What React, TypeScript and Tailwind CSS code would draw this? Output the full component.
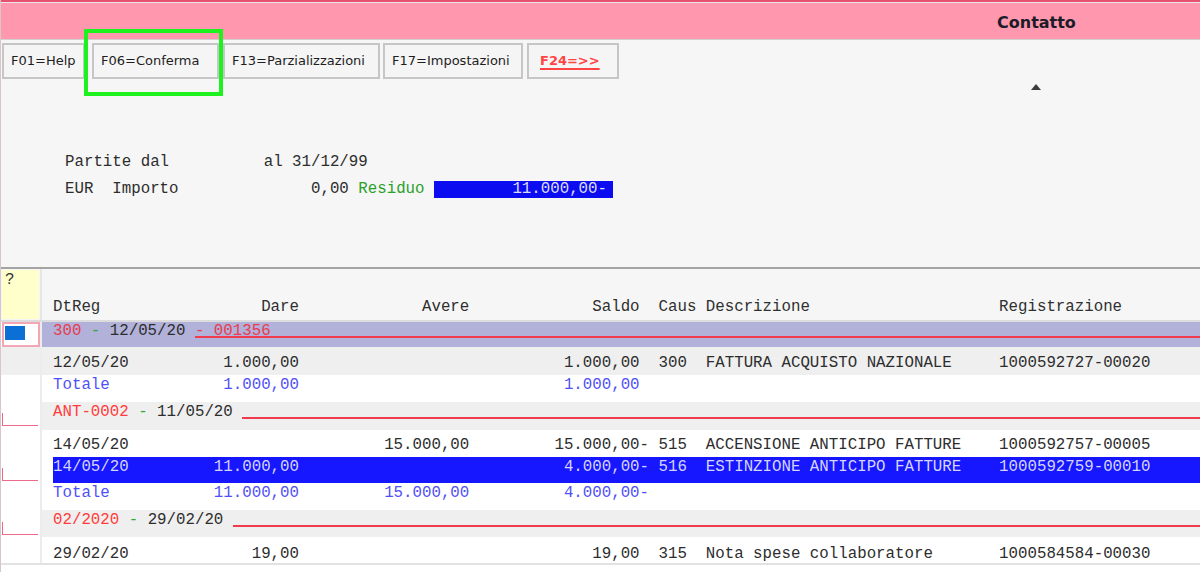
import React from "react";

const mono = "font-['Liberation_Mono',monospace] text-[15.78px]";

function pad(parts: Array<[number, string]>): string {
  let s = "";
  for (const [col, t] of parts) {
    while (s.length < col) s += " ";
    s += t;
  }
  return s;
}

function Row({
  h,
  gutterCls = "bg-white",
  mainCls = "bg-white",
  gutter,
  children,
}: {
  h: string;
  gutterCls?: string;
  mainCls?: string;
  gutter?: React.ReactNode;
  children?: React.ReactNode;
}) {
  return (
    <div className={`flex shrink-0 ${h}`}>
      <div className={`w-[39px] shrink-0 ${gutterCls}`}>{gutter}</div>
      <div className="w-[2px] shrink-0 bg-[#ececec]" />
      <div className={`flex-1 min-w-0 overflow-hidden ${mainCls}`}>{children}</div>
    </div>
  );
}

function Text({ pt, cls = "text-[#2d2d2d]", children }: { pt: string; cls?: string; children: React.ReactNode }) {
  return (
    <div className={`pl-[11px] ${pt} ${mono} leading-[16px] whitespace-pre ${cls}`}>{children}</div>
  );
}

function GroupText({ pt, children, tail }: { pt: string; children: React.ReactNode; tail?: React.ReactNode }) {
  return (
    <div className={`flex items-start pl-[11px] ${pt} ${mono} leading-[16px] whitespace-pre text-[#2d2d2d]`}>
      <span>{children}</span>
      <div className="flex-1 h-[15px] border-b-2 border-[#f03a4e] text-[#e83c50]">{tail}</div>
    </div>
  );
}

function Btn({ ml, w, pl = "pl-[7px]", children }: { ml: string; w: string; pl?: string; children: React.ReactNode }) {
  return (
    <div
      className={`${ml} ${w} ${pl} h-[36px] shrink-0 border-2 border-[#c6c6c6] bg-[#f5f5f5] flex items-center font-['DejaVu_Sans',sans-serif] text-[13px] text-[#1e1e1e] whitespace-nowrap`}
    >
      {children}
    </div>
  );
}

function LMark({ mt }: { mt: string }) {
  return <div className={`ml-[1px] ${mt} w-[36px] h-[13px] border-l border-b border-[#ec6a88]`} />;
}

export default function App() {
  return (
    <div className="relative w-[1200px] h-[572px] overflow-hidden bg-[#f6f6f6] border-l border-[#d8c6cb] flex flex-col">
      <div className="h-[2px] shrink-0 bg-[#e9506f]" />
      <div className="h-px shrink-0 bg-[#e8e8e8]" />
      <div className="h-[36px] shrink-0 bg-[#ff97ae] flex items-center pl-[996px] pt-[3px]">
        <span className="font-['DejaVu_Sans',sans-serif] font-bold text-[16px] text-[#1c1c28] whitespace-nowrap">
          Contatto
        </span>
      </div>
      <div className="h-px shrink-0 bg-[#d0d0d0]" />

      {/* Function keys */}
      <div className="flex h-[36px] shrink-0 mt-[3px]">
        <Btn ml="ml-[1px]" w="w-[83px]">F01=Help</Btn>
        <Btn ml="ml-[7px]" w="w-[127px]">F06=Conferma</Btn>
        <Btn ml="ml-[4px]" w="w-[157px]">F13=Parzializzazioni</Btn>
        <Btn ml="ml-[3px]" w="w-[140px]">F17=Impostazioni</Btn>
        <Btn ml="ml-[4px]" w="w-[92px]" pl="pl-[11px]">
          <span className="font-bold text-[#ff4444] underline decoration-2 underline-offset-[3px]">F24=&gt;&gt;</span>
        </Btn>
      </div>

      {/* Filter area */}
      <div className="h-[188px] shrink-0">
        <div className="h-[11px] pt-[5px] pl-[1030px]">
          <svg width="10" height="6" viewBox="0 0 10 6">
            <polygon points="0,6 5,0 10,6" fill="#3c3c3c" />
          </svg>
        </div>
        <div className={`mt-[64px] h-[16px] leading-[16px] pl-[64px] ${mono} whitespace-pre text-[#2d2d2d]`}>
          {pad([
            [0, "Partite dal"],
            [21, "al 31/12/99"],
          ])}
        </div>
        <div className={`mt-[11px] h-[17px] flex items-center pl-[64px] ${mono} whitespace-pre text-[#2d2d2d]`}>
          <span>{pad([[0, "EUR"], [5, "Importo"], [26, "0,00"]]) + " "}</span>
          <span className="text-[#2ba02b]">Residuo</span>
          <span> </span>
          <span className="inline-block w-[179px] h-[17px] leading-[17px] bg-[#0c0cf0] text-[#dcdcff] text-right pr-[6px]">
            11.000,00-
          </span>
        </div>
      </div>

      <div className="h-[2px] shrink-0 bg-[#a4a4a4]" />

      {/* Header */}
      <div className="flex shrink-0 h-[53px] border-b-2 border-[#dcdcdc]">
        <div className="w-[39px] shrink-0 pt-[1px]">
          <div className={`ml-[1px] w-[37px] h-[49px] bg-[#ffffcc] pl-[3px] pt-[3px] ${mono} text-[13px] leading-[14px] text-[#333]`}>
            ?
          </div>
        </div>
        <div className="w-[2px] shrink-0 bg-[#e6e6e6]" />
        <div className="flex-1 min-w-0 overflow-hidden">
          <Text pt="pt-[30px]" cls="text-[#2f2f2f]">
            {pad([
              [0, "DtReg"],
              [22, "Dare"],
              [39, "Avere"],
              [57, "Saldo"],
              [64, "Caus"],
              [69, "Descrizione"],
              [100, "Registrazione"],
            ])}
          </Text>
        </div>
      </div>

      {/* Group 1 */}
      <Row
        h="h-[25px]"
        gutterCls="bg-white"
        mainCls="bg-[#b1b1d9]"
        gutter={
          <div className="ml-[1px] w-[38px] h-[25px] border-2 border-[#f3a6b6] bg-white pl-[1px] pt-[2px]">
            <div className="w-[20px] h-[14px] bg-[#0b6fd6]" />
          </div>
        }
      >
        <GroupText pt="pt-[1px]" tail="- 001356">
          <span className="text-[#e83c50]">300</span>
          <span className="text-[#34a834]"> - </span>
          <span>12/05/20 </span>
        </GroupText>
      </Row>

      <Row h="h-[28px]" gutterCls="bg-[#efefef]" mainCls="bg-[#efefef]">
        <Text pt="pt-[8px]">
          {pad([
            [0, "12/05/20"],
            [18, "1.000,00"],
            [54, "1.000,00"],
            [64, "300"],
            [69, "FATTURA ACQUISTO NAZIONALE"],
            [100, "1000592727-00020"],
          ])}
        </Text>
      </Row>

      <Row h="h-[27px]">
        <Text pt="pt-[2px]" cls="text-[#5050f8]">
          {pad([
            [0, "Totale"],
            [18, "1.000,00"],
            [54, "1.000,00"],
          ])}
        </Text>
      </Row>

      {/* Group ANT */}
      <Row h="h-[28px]" mainCls="bg-[#efefef]" gutter={<LMark mt="mt-[11px]" />}>
        <GroupText pt="pt-[2px]">
          <span className="text-[#ff3c3c]">ANT-0002</span>
          <span className="text-[#34a834]"> - </span>
          <span>11/05/20 </span>
        </GroupText>
      </Row>

      <Row h="h-[27px]">
        <Text pt="pt-[7px]">
          {pad([
            [0, "14/05/20"],
            [35, "15.000,00"],
            [53, "15.000,00-"],
            [64, "515"],
            [69, "ACCENSIONE ANTICIPO FATTURE"],
            [100, "1000592757-00005"],
          ])}
        </Text>
      </Row>

      <Row h="h-[26px]" gutter={<LMark mt="mt-[11px]" />}>
        <div className="pl-[11px] h-full">
          <div className={`h-full bg-[#1616ff] pt-[2px] ${mono} leading-[16px] whitespace-pre text-[#d4d4ff]`}>
            {pad([
              [0, "14/05/20"],
              [17, "11.000,00"],
              [54, "4.000,00-"],
              [64, "516"],
              [69, "ESTINZIONE ANTICIPO FATTURE"],
              [100, "1000592759-00010"],
            ])}
          </div>
        </div>
      </Row>

      <Row h="h-[27px]">
        <Text pt="pt-[2px]" cls="text-[#5050f8]">
          {pad([
            [0, "Totale"],
            [17, "11.000,00"],
            [35, "15.000,00"],
            [54, "4.000,00-"],
          ])}
        </Text>
      </Row>

      {/* Group 02/2020 */}
      <Row h="h-[27px]" mainCls="bg-[#efefef]" gutter={<LMark mt="mt-[12px]" />}>
        <GroupText pt="pt-[2px]">
          <span className="text-[#ff3c3c]">02/2020</span>
          <span className="text-[#34a834]"> - </span>
          <span>29/02/20 </span>
        </GroupText>
      </Row>

      <Row h="h-[26px]">
        <Text pt="pt-[9px]">
          {pad([
            [0, "29/02/20"],
            [21, "19,00"],
            [57, "19,00"],
            [64, "315"],
            [69, "Nota spese collaboratore"],
            [100, "1000584584-00030"],
          ])}
        </Text>
      </Row>

      <div className="h-[2px] shrink-0 bg-[#e2e2e2]" />
      <div className="flex-1 bg-white" />

      {/* Focus frame around F06 */}
      <div className="absolute left-[83px] top-[29px] w-[139px] h-[67px] border-4 border-[#1ef21e]" />
    </div>
  );
}
